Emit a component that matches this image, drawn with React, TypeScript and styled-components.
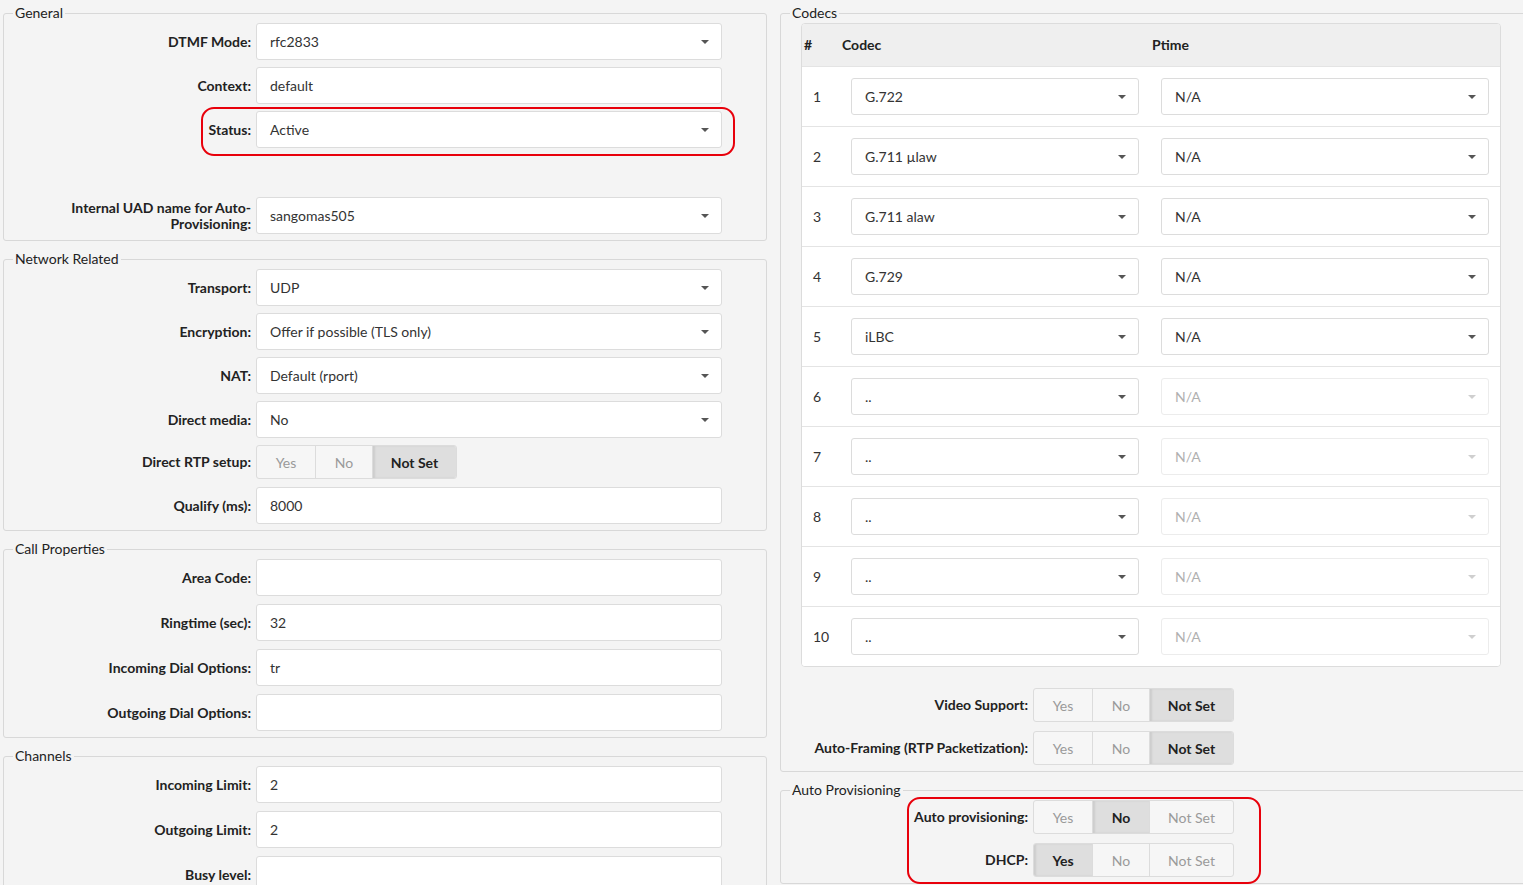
import styled, {createGlobalStyle} from 'styled-components';

const GlobalStyle = createGlobalStyle`
  html, body {
    margin: 0;
    background: #f4f4f4;
    overflow: hidden;
  }
  body {
    font-family: Lato, 'Open Sans', sans-serif;
    font-size: 14px;
    color: #333;
  }
`;

const Page = styled.div`
  display: grid;
  grid-template-columns: 764px 764px;
  column-gap: 13px;
  align-items: start;
  padding: 3px 0 0 3px;
  width: 1560px;
`;

const Column = styled.div`
  display: flex;
  flex-direction: column;
  gap: 8px;
`;

const Fieldset = styled.fieldset`
  position: relative;
  margin: 0;
  padding: 0;
  min-width: 0;
  border: 1px solid #d8d8d8;
  border-radius: 3px;
  & > :last-child {
    margin-bottom: 6px;
  }
`;

const Legend = styled.legend`
  margin-left: 9px;
  padding: 0 2px;
  line-height: 20px;
  font-size: 14px;
  color: #222;
`;

const Row = styled.div<{$gap?: number}>`
  display: grid;
  grid-template-columns: 252px 466px;
  align-items: center;
  margin-bottom: ${p => p.$gap ?? 7}px;
`;

const Spacer = styled.div`
  height: 42px;
`;

const Label = styled.label`
  padding: 0 5px 0 15px;
  text-align: right;
  font-weight: 700;
  line-height: 16px;
  color: #222;
`;

const Field = styled.div<{$disabled?: boolean}>`
  box-sizing: border-box;
  height: 37px;
  display: flex;
  align-items: center;
  justify-content: space-between;
  padding: 0 12px 0 13px;
  background: #fff;
  border: 1px solid ${p => (p.$disabled ? '#ececec' : '#dcdcdc')};
  border-radius: 3px;
  color: ${p => (p.$disabled ? '#b0b0b0' : '#333')};
`;

const Caret = styled.span<{$disabled?: boolean}>`
  width: 0;
  height: 0;
  border-left: 4px solid transparent;
  border-right: 4px solid transparent;
  border-top: 4px solid ${p => (p.$disabled ? '#cfcfcf' : '#555')};
`;

const Toggle = styled.div`
  display: inline-flex;
  justify-self: start;
  height: 34px;
  box-sizing: border-box;
  border: 1px solid #dcdcdc;
  border-radius: 3px;
  overflow: hidden;
  background: #f6f6f6;
`;

const ToggleOption = styled.span<{$active?: boolean; $width: number}>`
  width: ${p => p.$width}px;
  display: flex;
  align-items: center;
  justify-content: center;
  border-left: 1px solid #dcdcdc;
  color: ${p => (p.$active ? '#222' : '#9a9a9a')};
  font-weight: ${p => (p.$active ? 700 : 400)};
  background: ${p => (p.$active ? '#dedede' : 'transparent')};
  box-shadow: ${p => (p.$active ? 'inset 2px 0 2px rgba(0, 0, 0, 0.08)' : 'none')};
  &:first-child {
    border-left: 0;
  }
`;

// wrapper for the red review annotation drawn over a group of rows
const Marked = styled.div`
  position: relative;
  margin-bottom: 7px;
  & > :last-child {
    margin-bottom: 0;
  }
`;

const Highlight = styled.div<{$left: number; $top: number; $width: number; $height: number}>`
  position: absolute;
  left: ${p => p.$left}px;
  top: ${p => p.$top}px;
  width: ${p => p.$width}px;
  height: ${p => p.$height}px;
  box-sizing: border-box;
  border: 2px solid #e8000b;
  border-radius: 13px;
  pointer-events: none;
`;

const Table = styled.div`
  width: 698px;
  margin: 0 0 21px 20px;
  background: #fff;
  border: 1px solid #dcdcdc;
  border-radius: 4px;
  overflow: hidden;
`;

const TableRow = styled.div<{$head?: boolean}>`
  display: grid;
  grid-template-columns: 37px 310px 1fr;
  align-items: center;
  height: ${p => (p.$head ? 42 : 60)}px;
  background: ${p => (p.$head ? '#efefef' : '#fff')};
  border-top: ${p => (p.$head ? 'none' : '1px solid #e4e4e4')};
  box-sizing: ${p => (p.$head ? 'content-box' : 'border-box')};
`;

const HeadCell = styled.div`
  padding: 0 0 1px 3px;
  font-weight: 700;
  color: #222;
  &:first-child {
    padding-left: 2px;
  }
`;

const Cell = styled.div`
  padding: 0 11px 0 12px;
  color: #333;
  &:first-child {
    padding: 0 0 0 11px;
  }
  &:nth-child(2) {
    padding-right: 10px;
  }
`;

const RightRow = styled(Row)`
  grid-template-columns: 252px auto;
  margin-bottom: 9px;
`;

type ToggleValue = 'Yes' | 'No' | 'Not Set';
const toggleWidths: Record<ToggleValue, number> = {Yes: 58, No: 56, 'Not Set': 83};

function Select({value, disabled}: {value: string; disabled?: boolean}) {
  return (
    <Field $disabled={disabled}>
      <span>{value}</span>
      <Caret $disabled={disabled} />
    </Field>
  );
}

function YesNo({value}: {value: ToggleValue}) {
  return (
    <Toggle>
      {(Object.keys(toggleWidths) as ToggleValue[]).map(opt => (
        <ToggleOption key={opt} $active={opt === value} $width={toggleWidths[opt]}>
          {opt}
        </ToggleOption>
      ))}
    </Toggle>
  );
}

const codecs = ['G.722', 'G.711 \u00B5law', 'G.711 alaw', 'G.729', 'iLBC', '..', '..', '..', '..', '..'];

export default function App() {
  return (
    <>
      <GlobalStyle />
      <Page>
        <Column>
          <Fieldset>
            <Legend>General</Legend>
            <Row>
              <Label>DTMF Mode:</Label>
              <Select value="rfc2833" />
            </Row>
            <Row>
              <Label>Context:</Label>
              <Field>default</Field>
            </Row>
            <Marked>
              <Highlight $left={197} $top={-4} $width={534} $height={49} />
              <Row>
                <Label>Status:</Label>
                <Select value="Active" />
              </Row>
            </Marked>
            <Spacer />
            <Row>
              <Label>Internal UAD name for Auto-Provisioning:</Label>
              <Select value="sangomas505" />
            </Row>
          </Fieldset>

          <Fieldset>
            <Legend>Network Related</Legend>
            <Row>
              <Label>Transport:</Label>
              <Select value="UDP" />
            </Row>
            <Row>
              <Label>Encryption:</Label>
              <Select value="Offer if possible (TLS only)" />
            </Row>
            <Row>
              <Label>NAT:</Label>
              <Select value="Default (rport)" />
            </Row>
            <Row>
              <Label>Direct media:</Label>
              <Select value="No" />
            </Row>
            <Row $gap={8}>
              <Label>Direct RTP setup:</Label>
              <YesNo value="Not Set" />
            </Row>
            <Row>
              <Label>Qualify (ms):</Label>
              <Field>8000</Field>
            </Row>
          </Fieldset>

          <Fieldset>
            <Legend>Call Properties</Legend>
            <Row $gap={8}>
              <Label>Area Code:</Label>
              <Field />
            </Row>
            <Row $gap={8}>
              <Label>Ringtime (sec):</Label>
              <Field>32</Field>
            </Row>
            <Row $gap={8}>
              <Label>Incoming Dial Options:</Label>
              <Field>tr</Field>
            </Row>
            <Row $gap={8}>
              <Label>Outgoing Dial Options:</Label>
              <Field />
            </Row>
          </Fieldset>

          <Fieldset>
            <Legend>Channels</Legend>
            <Row $gap={8}>
              <Label>Incoming Limit:</Label>
              <Field>2</Field>
            </Row>
            <Row $gap={8}>
              <Label>Outgoing Limit:</Label>
              <Field>2</Field>
            </Row>
            <Row $gap={8}>
              <Label>Busy level:</Label>
              <Field />
            </Row>
          </Fieldset>
        </Column>

        <Column>
          <Fieldset>
            <Legend>Codecs</Legend>
            <Table>
              <TableRow $head>
                <HeadCell>#</HeadCell>
                <HeadCell>Codec</HeadCell>
                <HeadCell>Ptime</HeadCell>
              </TableRow>
              {codecs.map((codec, i) => (
                <TableRow key={i}>
                  <Cell>{i + 1}</Cell>
                  <Cell>
                    <Select value={codec} />
                  </Cell>
                  <Cell>
                    <Select value="N/A" disabled={codec === '..'} />
                  </Cell>
                </TableRow>
              ))}
            </Table>
            <RightRow>
              <Label>Video Support:</Label>
              <YesNo value="Not Set" />
            </RightRow>
            <RightRow>
              <Label>Auto-Framing (RTP Packetization):</Label>
              <YesNo value="Not Set" />
            </RightRow>
          </Fieldset>

          <Fieldset>
            <Legend>Auto Provisioning</Legend>
            <Marked>
              <Highlight $left={126} $top={-3} $width={354} $height={87} />
              <RightRow>
                <Label>Auto provisioning:</Label>
                <YesNo value="No" />
              </RightRow>
              <RightRow>
                <Label>DHCP:</Label>
                <YesNo value="Yes" />
              </RightRow>
            </Marked>
          </Fieldset>
        </Column>
      </Page>
    </>
  );
}
